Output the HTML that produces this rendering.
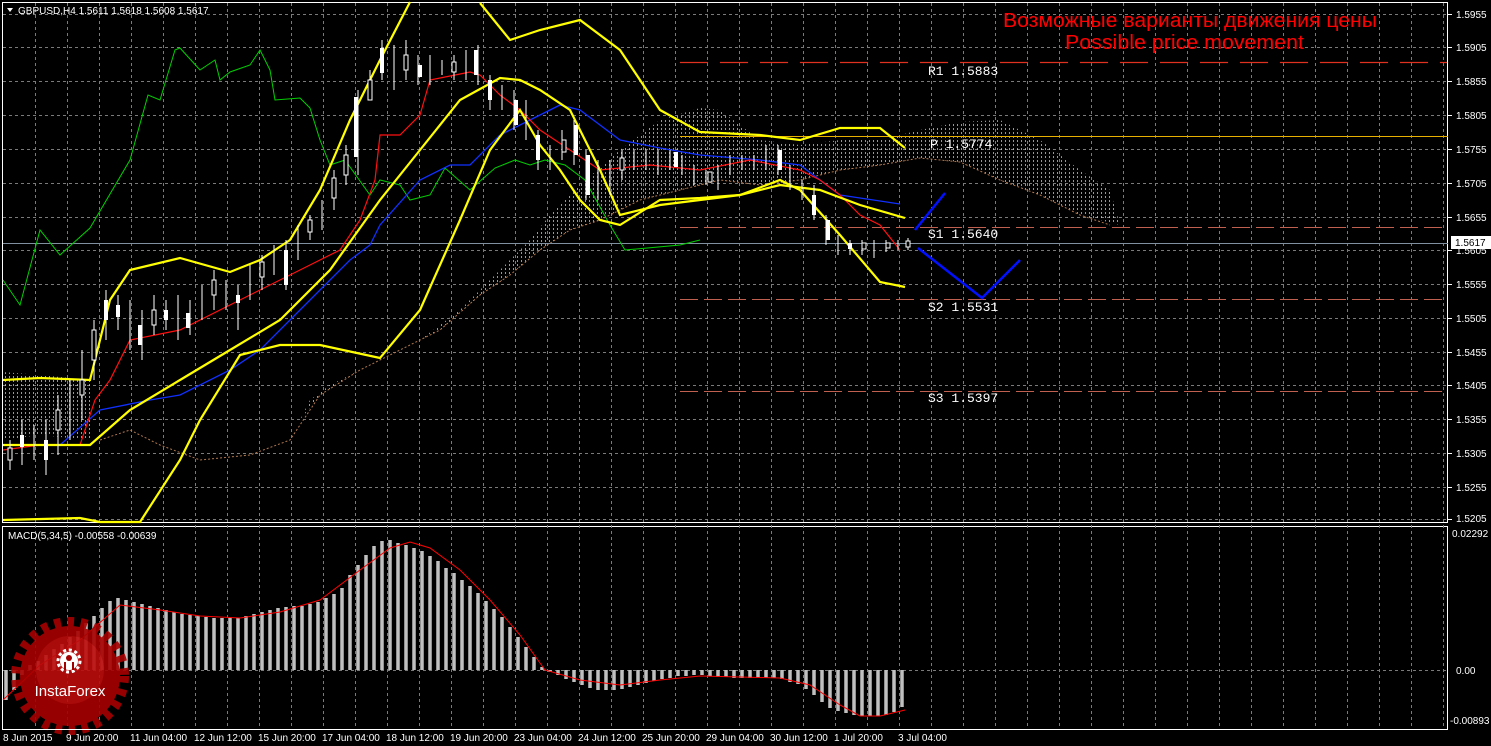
<!DOCTYPE html>
<html><head><meta charset="utf-8">
<style>
html,body{margin:0;padding:0;background:#000;width:1491px;height:746px;overflow:hidden}
svg{display:block}
text{font-family:"Liberation Sans",sans-serif}
.ax{font-size:10px;fill:#fff}
.lv{font-family:"Liberation Mono",monospace;font-size:13px;fill:#fff}
</style></head><body>
<svg width="1491" height="746" viewBox="0 0 1491 746" xmlns="http://www.w3.org/2000/svg">
<defs>
<pattern id="hatch" width="4" height="4" patternUnits="userSpaceOnUse">
<rect x="1" y="0" width="1" height="2" fill="#d8d8d8"/>
</pattern>
</defs>
<rect width="1491" height="746" fill="#000"/>
<rect x="2.5" y="2.5" width="1445" height="520" fill="none" stroke="#fff"/>
<rect x="2.5" y="526.5" width="1445" height="203" fill="none" stroke="#fff"/>
<g stroke="#7a7a7a" stroke-dasharray="3 3" stroke-width="1">
<path d="M3 14.5H1447M3 47.5H1447M3 81.5H1447M3 115.5H1447M3 149.5H1447M3 183.5H1447M3 217.5H1447M3 250.5H1447M3 284.5H1447M3 318.5H1447M3 352.5H1447M3 385.5H1447M3 419.5H1447M3 453.5H1447M3 487.5H1447M3 519.5H1447M3 670.5H1447"/>
<path d="M35.5 3V729M67.5 3V729M99.5 3V729M131.5 3V729M163.5 3V729M195.5 3V729M227.5 3V729M259.5 3V729M291.5 3V729M323.5 3V729M355.5 3V729M387.5 3V729M419.5 3V729M451.5 3V729M483.5 3V729M515.5 3V729M547.5 3V729M579.5 3V729M611.5 3V729M643.5 3V729M675.5 3V729M707.5 3V729M739.5 3V729M771.5 3V729M803.5 3V729M835.5 3V729M867.5 3V729M899.5 3V729M931.5 3V729M963.5 3V729M995.5 3V729M1027.5 3V729M1059.5 3V729M1091.5 3V729M1123.5 3V729M1155.5 3V729M1187.5 3V729M1219.5 3V729M1251.5 3V729M1283.5 3V729M1315.5 3V729M1347.5 3V729M1379.5 3V729M1411.5 3V729M1443.5 3V729"/>
</g>
<path d="M3 372 L40 375 L90 380 L90 440 L40 435 L3 440Z" fill="url(#hatch)" opacity="0.7"/>
<path d="M290 440 L310 400 L330 385 L370 365 L420 340 L460 310 L500 270 L530 240 L550 215 L580 185 L620 150 L660 120 L700 108 L720 110 L760 140 L800 145 L840 140 L880 140 L920 130 L960 122 L1000 120 L1040 140 L1080 170 L1110 190 L1120 225 L1080 215 L1040 195 L1000 180 L960 162 L920 158 L880 165 L840 170 L800 180 L760 185 L720 180 L680 190 L640 200 L600 220 L570 230 L540 250 L510 275 L480 295 L440 330 L400 350 L360 370 L320 395 L300 420Z" fill="url(#hatch)" opacity="0.7"/>
<polyline points="100,440 130,430 160,445 200,460 250,455 290,440 320,395 360,370 400,350 440,330 480,295 510,275 540,250 570,230 600,220 640,200 680,190 720,180 760,185 800,180 840,170 880,165 920,158 960,162 1000,180 1040,195 1080,215 1110,225" fill="none" stroke="#b07850" stroke-width="1" stroke-dasharray="2 2"/>
<path d="M680 62.5H1447" stroke="#e03020" stroke-dasharray="28 12" stroke-width="1.2"/>
<path d="M680 136.5H1448" stroke="#e8b000" stroke-width="1"/>
<path d="M680 227.5H1447M680 299.5H1447M680 391.5H1447" stroke="#c06050" stroke-dasharray="18 6" stroke-width="1"/>
<path d="M3 243.5H1448" stroke="#8090a0" stroke-width="1"/>
<polyline points="3,280 20,305 40,230 60,255 90,228 130,160 148,95 160,100 175,50 180,48 200,70 215,60 220,80 230,72 250,65 260,50 270,70 275,100 300,98 310,108 320,140 330,165 345,160 370,195 380,180 400,185 410,200 430,195 445,168 470,190 495,168 515,160 530,165 545,160 565,165 585,180 610,225 625,250 680,245 700,240" fill="none" stroke="#00d000" stroke-width="1"/>
<polyline points="3,445 60,445 100,410 150,400 180,395 230,370 260,350 300,310 330,280 350,260 370,245 380,225 420,180 450,165 470,165 500,135 530,120 560,105 580,110 620,140 660,148 700,155 760,160 800,165 840,195 900,204" fill="none" stroke="#1030ff" stroke-width="1.3"/>
<polyline points="3,450 40,445 80,445 95,400 110,380 130,340 180,330 240,300 300,270 340,250 360,220 375,180 380,135 400,135 420,115 430,80 470,72 480,75 500,95 520,110 540,130 570,150 600,170 650,165 700,170 750,160 800,170 820,180 840,195 860,215 880,225 900,250" fill="none" stroke="#ff1010" stroke-width="1.2"/>
<g fill="none" stroke="#ffff00" stroke-width="2.2">
<polyline points="3,380 40,378 90,380 110,300 130,270 180,258 230,272 260,260 290,240 320,190 350,120 380,60 410,2"/>
<polyline points="480,3 510,40 540,30 580,20 620,50 660,110 700,132 760,135 800,140 840,128 880,128 905,148"/>
<polyline points="3,445 90,445 130,410 180,380 230,350 280,320 330,270 380,200 420,150 460,100 500,78 520,80 540,90 570,110 600,170 620,215 660,205 700,200 740,195 780,185 820,190 860,205 905,218"/>
<polyline points="3,520 80,518 100,522 140,522 180,460 200,420 240,355 280,345 320,345 380,358 420,310 460,220 490,150 520,110 540,145 560,170 580,200 600,220 620,225 660,200 700,198 740,195 780,180 800,190 840,235 880,282 905,287"/>
</g>
<g stroke="#fff" stroke-width="1" fill="#000">
<path d="M10 440V470M22 420V465M34 425V460M46 420V475M58 395V455M70 380V440M82 350V420M94 320V380M106 290V340M118 295V330M130 300V350M142 310V360M154 295V335M166 300V330M178 295V340M190 300V335M202 285V320M214 270V310M226 280V310M238 285V330M250 265V300M262 255V290M274 245V275M286 240V290M298 225V260M310 215V240M322 200V230M334 170V210M346 145V185M358 90V175M370 70V100M382 40V80M394 45V90M406 40V80M418 55V85M430 55V85M442 60V75M454 55V80M466 50V80M478 45V85M490 75V110M502 85V110M514 90V130M526 100V140M538 130V170M550 145V170M562 130V160M574 120V165M586 150V200M598 160V200M610 160V195M622 150V180M634 150V170M646 150V170M658 150V175M670 150V170M682 155V175M694 165V185M706 170V185M718 165V190M730 155V175M742 155V170M754 155V170M766 145V170M778 145V175M790 165V190M802 180V200M814 185V220M826 215V245M838 235V255M850 240V255M862 240V255M874 240V258M886 240V252M898 240V250M908 238V250"/>
</g>
<g fill="#fff">
<rect x="20" y="435" width="4" height="12"/><rect x="44" y="440" width="4" height="20"/><rect x="104" y="300" width="4" height="20"/><rect x="116" y="305" width="4" height="12"/><rect x="138" y="325" width="4" height="20"/><rect x="164" y="310" width="4" height="10"/><rect x="186" y="313" width="4" height="15"/><rect x="236" y="295" width="4" height="8"/><rect x="284" y="250" width="4" height="35"/><rect x="354" y="97" width="4" height="60"/><rect x="380" y="48" width="4" height="25"/><rect x="418" y="65" width="4" height="12"/><rect x="474" y="50" width="4" height="25"/><rect x="488" y="80" width="4" height="20"/><rect x="514" y="100" width="4" height="25"/><rect x="536" y="135" width="4" height="25"/><rect x="574" y="125" width="4" height="30"/><rect x="586" y="155" width="4" height="40"/><rect x="674" y="152" width="4" height="15"/><rect x="778" y="150" width="4" height="20"/><rect x="812" y="195" width="4" height="20"/><rect x="826" y="220" width="4" height="20"/><rect x="848" y="243" width="4" height="6"/></g>
<g stroke="#fff" fill="#000"><rect x="8" y="448" width="4" height="12"/><rect x="56" y="410" width="4" height="20"/><rect x="80" y="380" width="4" height="15"/><rect x="92" y="330" width="4" height="30"/><rect x="152" y="310" width="4" height="15"/><rect x="212" y="280" width="4" height="15"/><rect x="260" y="262" width="4" height="15"/><rect x="308" y="220" width="4" height="12"/><rect x="332" y="178" width="4" height="20"/><rect x="344" y="155" width="4" height="20"/><rect x="368" y="80" width="4" height="20"/><rect x="404" y="55" width="4" height="15"/><rect x="452" y="62" width="4" height="10"/><rect x="562" y="140" width="4" height="12"/><rect x="620" y="158" width="4" height="12"/><rect x="708" y="172" width="4" height="10"/><rect x="862" y="243" width="4" height="6"/><rect x="886" y="243" width="4" height="5"/><rect x="906" y="241" width="4" height="6"/></g>
<polyline points="915,230 945,193" fill="none" stroke="#0010ff" stroke-width="2.5"/>
<polyline points="918,248 982,298 1020,260" fill="none" stroke="#0010ff" stroke-width="2.5"/>
<text class="lv" x="928" y="75">R1 1.5883</text>
<text class="lv" x="930" y="148">P 1.5774</text>
<text class="lv" x="928" y="238">S1 1.5640</text>
<text class="lv" x="928" y="311">S2 1.5531</text>
<text class="lv" x="928" y="402">S3 1.5397</text>
<text x="1003" y="27" fill="#ff0000" font-size="20" textLength="374" lengthAdjust="spacingAndGlyphs">Возможные варианты движения цены</text>
<text x="1065" y="49" fill="#ff0000" font-size="20" textLength="239" lengthAdjust="spacingAndGlyphs">Possible price movement</text>
<path d="M7 8H13L10 12Z" fill="#fff"/>
<text class="ax" x="18" y="14">GBPUSD,H4  1.5611 1.5618 1.5608 1.5617</text>
<text class="ax" x="8" y="539">MACD(5,34,5) -0.00558 -0.00639</text>
<g class="ax">
<path d="M1448 14.5h4M1448 47.5h4M1448 81.5h4M1448 115.5h4M1448 149.5h4M1448 183.5h4M1448 217.5h4M1448 250.5h4M1448 284.5h4M1448 318.5h4M1448 352.5h4M1448 385.5h4M1448 419.5h4M1448 453.5h4M1448 487.5h4M1448 519.5h4" stroke="#fff"/>
<text x="1456" y="18">1.5955</text><text x="1456" y="51">1.5905</text><text x="1456" y="85">1.5855</text><text x="1456" y="119">1.5805</text><text x="1456" y="153">1.5755</text><text x="1456" y="187">1.5705</text><text x="1456" y="221">1.5655</text><text x="1456" y="254">1.5605</text><text x="1456" y="288">1.5555</text><text x="1456" y="322">1.5505</text><text x="1456" y="356">1.5455</text><text x="1456" y="389">1.5405</text><text x="1456" y="423">1.5355</text><text x="1456" y="457">1.5305</text><text x="1456" y="491">1.5255</text><text x="1456" y="522">1.5205</text>
<text x="1452" y="537">0.02292</text><text x="1456" y="674">0.00</text><text x="1450" y="724">-0.00893</text>
</g>
<rect x="1451" y="236" width="40" height="13" fill="#fff"/>
<text x="1455" y="246" font-size="10" fill="#000">1.5617</text>
<path stroke="#c0c0c0" stroke-width="3.5" d="M6 670V700M14 670V690M22 670V675M30 670V665M38 670V661M46 670V655M54 670V649M62 670V644M70 670V637M78 670V631M86 670V623M94 670V616M102 670V608M110 670V601M118 670V598M126 670V600M134 670V602M142 670V604M150 670V606M158 670V608M166 670V610M174 670V612M182 670V614M190 670V615M198 670V616M206 670V617M214 670V618M222 670V618M230 670V618M238 670V618M246 670V616M254 670V614M262 670V612M270 670V610M278 670V608M286 670V607M294 670V606M302 670V606M310 670V604M318 670V602M326 670V598M334 670V594M342 670V588M350 670V575M358 670V565M366 670V555M374 670V546M382 670V541M390 670V540M398 670V543M406 670V545M414 670V548M422 670V551M430 670V556M438 670V561M446 670V568M454 670V573M462 670V580M470 670V586M478 670V593M486 670V601M494 670V609M502 670V617M510 670V627M518 670V637M526 670V647M534 670V657M542 670V667M550 670V672M558 670V675M566 670V679M574 670V682M582 670V685M590 670V688M598 670V690M606 670V690M614 670V690M622 670V689M630 670V687M638 670V685M646 670V683M654 670V681M662 670V679M670 670V678M678 670V676M686 670V676M694 670V675M702 670V675M710 670V676M718 670V677M726 670V677M734 670V678M742 670V678M750 670V678M758 670V678M766 670V678M774 670V678M782 670V679M790 670V682M798 670V684M806 670V689M814 670V695M822 670V702M830 670V708M838 670V711M846 670V713M854 670V715M862 670V716M870 670V716M878 670V716M886 670V715M894 670V712M902 670V707"/>
<polyline points="3,700 40,665 80,640 120,605 160,610 200,616 240,618 280,612 320,600 360,570 390,548 410,542 430,548 460,570 490,600 520,635 545,670 580,680 620,685 660,680 700,676 740,677 780,678 810,685 840,705 860,716 880,716 905,710" fill="none" stroke="#ff0000" stroke-width="1"/>
<g opacity="0.9">
<circle cx="70" cy="676" r="50" fill="#a80000"/>
<circle cx="70" cy="676" r="53" fill="none" stroke="#a80000" stroke-width="12" stroke-dasharray="6.5 6.5"/>
<circle cx="70" cy="670" r="34" fill="#d01818" opacity="0.5"/>
</g>
<g fill="#fff">
<circle cx="69" cy="661" r="9"/>
<circle cx="69" cy="661" r="11" fill="none" stroke="#fff" stroke-width="3" stroke-dasharray="3 2.7"/>
<circle cx="69" cy="658" r="3" fill="#a00000"/>
<rect x="64" y="662" width="2" height="8" fill="#a00000"/><rect x="72" y="662" width="2" height="8" fill="#a00000"/>
</g>
<text x="70" y="696" fill="#fff" font-size="15" text-anchor="middle">InstaForex</text>
<path d="M3 729.5H1448" stroke="#fff"/>
<g class="ax">
<text x="3" y="741">8 Jun 2015</text><text x="66" y="741">9 Jun 20:00</text><text x="130" y="741">11 Jun 04:00</text><text x="194" y="741">12 Jun 12:00</text><text x="258" y="741">15 Jun 20:00</text><text x="322" y="741">17 Jun 04:00</text><text x="386" y="741">18 Jun 12:00</text><text x="450" y="741">19 Jun 20:00</text><text x="514" y="741">23 Jun 04:00</text><text x="578" y="741">24 Jun 12:00</text><text x="642" y="741">25 Jun 20:00</text><text x="706" y="741">29 Jun 04:00</text><text x="770" y="741">30 Jun 12:00</text><text x="834" y="741">1 Jul 20:00</text><text x="898" y="741">3 Jul 04:00</text>
</g>
</svg>
</body></html>
